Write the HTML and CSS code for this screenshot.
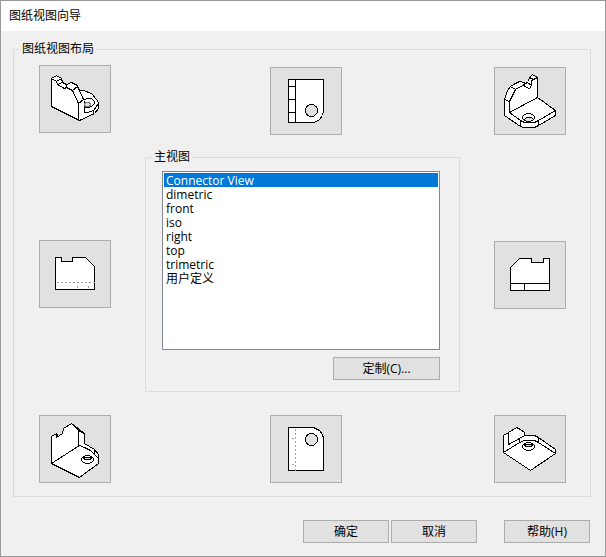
FILE: index.html
```html
<!DOCTYPE html>
<html lang="zh-CN">
<head>
  <meta charset="UTF-8">
  <title>图纸视图向导</title>
  <link rel="stylesheet" href="styles.css">
</head>
<body>
  <div class="dialog">
    <div class="title-bar">图纸视图向导</div>

    <form class="content">
      <fieldset class="group">
        <legend>图纸视图布局</legend>
        <div class="layout">

          <!-- Left views -->
          <div class="column">
            <button type="button" class="view" aria-label="左上视图">
              <svg viewBox="0.5 0.5 70 66">
                <path class="face" d="M12 13L17 10L22 13L23 17L27 19L32 17L38 20L40 25H44L52 28L57 34L59 37V43L55 48L40 55L12 41Z"/>
                <path d="M12 13L17 16L22 13M17 16L18 19L25 23L27 22M23 17L18 19M27 19V22L33 25L39 38V55M33 25L38 21L44 34L39 38M45 35V47H48L54 45L59 38M54 45V48"/>
                <path d="M45 34L48 33H52L55 36V38L52 41L48 42H45"/>
                <ellipse class="opening" cx="48" cy="39" rx="3" ry="2"/>
              </svg>
            </button>
            <button type="button" class="view" aria-label="左视图">
              <svg viewBox="0.5 0.5 70 66">
                <path class="face" d="M16 17H22V21H33V17H46L55 26V49H16Z"/>
                <path class="hidden-line" d="M17 42H55"/>
                <path class="hidden-tick" d="M38 45V47M49 45V47"/>
              </svg>
            </button>
            <button type="button" class="view" aria-label="左下视图">
              <svg viewBox="0.5 0.5 70 66">
                <path class="face" d="M12 21L17 18V22L23 18L24 13L32 8L45 18V28L55 34L59 39V48L40 62L12 48Z"/>
                <path d="M12 48L40 30L45 32L51 35L55 39L59 43M39 15V30M32 8L39 15L45 18M17 18L19 21M55 34V38"/>
                <ellipse cx="48" cy="44" rx="6" ry="4"/>
                <path class="hole" d="M44 42H52L51 44H45Z"/>
              </svg>
            </button>
          </div>

          <!-- Top view, main view list, bottom view -->
          <div class="column middle">
            <button type="button" class="view" aria-label="上视图">
              <svg viewBox="0.5 0.5 70 66">
                <path class="face" d="M18 12H53V44L52 48L49 52L46 54L43 55H18Z"/>
                <path d="M25 12V55M18 19H25M18 32H25M18 45H25"/>
                <circle class="hole" cx="41" cy="43" r="6"/>
              </svg>
            </button>

            <fieldset class="group main-view">
              <legend><label for="viewList">主视图</label></legend>
              <div class="main-body">
                <select id="viewList" size="8">
                  <option selected>Connector View</option>
                  <option>dimetric</option>
                  <option>front</option>
                  <option>iso</option>
                  <option>right</option>
                  <option>top</option>
                  <option>trimetric</option>
                  <option>用户定义</option>
                </select>
                <button type="button" class="btn custom">定制(C)...</button>
              </div>
            </fieldset>

            <button type="button" class="view" aria-label="下视图">
              <svg viewBox="0.5 0.5 70 66">
                <path class="face" d="M18 12H43L49 15L52 19L53 23V55H18Z"/>
                <path class="hidden-line" d="M25 13V55"/>
                <path class="hidden-tick" d="M21 23H23M21 49H23"/>
                <circle class="hole" cx="41" cy="24" r="6"/>
              </svg>
            </button>
          </div>

          <!-- Right views -->
          <div class="column right">
            <button type="button" class="view" aria-label="右上视图">
              <svg viewBox="0.5 0.5 70 66">
                <path class="face" d="M10 32L13 23L16 19L21 16L25 14L30 15V17L34 14L35 10L38 7L43 10V30L61 43V48L44 58L40 60H29L26 59L10 48Z"/>
                <path d="M10 32L15 34L21 22L30 17M16 19L21 22M15 34V45L43 30M15 45L26 53L30 55H40L44 53L61 43M26 53V58M44 53V58"/>
                <path d="M30 17V19L35 21L37 18L33 15M37 18V13L39 12L43 10M35 10L39 12"/>
                <ellipse cx="34" cy="50" rx="6" ry="4"/>
                <path class="hole" d="M30 52L32 50H37L39 52L36 54H32Z"/>
              </svg>
            </button>
            <button type="button" class="view" aria-label="右视图">
              <svg viewBox="0.5 0.5 70 66">
                <path class="face" d="M25 17H37V21H49V17H55V49H16V26Z"/>
                <path d="M16 42H55M30 42V49"/>
              </svg>
            </button>
            <button type="button" class="view" aria-label="右下视图">
              <svg viewBox="0.5 0.5 70 66">
                <path class="face" d="M9 20L14 17L22 12L26 14L30 17V20H40L44 22L61 34V38L36 55L9 37Z"/>
                <path d="M14 17V29L25 23L30 20M9 37L25 27L30 25H40L44 27L61 38M25 23V27M44 22V27"/>
                <ellipse cx="34" cy="31" rx="6" ry="4"/>
                <path class="hole" d="M30 29H38L37 31H31Z"/>
              </svg>
            </button>
          </div>

        </div>
      </fieldset>

      <div class="footer">
        <button type="button" class="btn">确定</button>
        <button type="button" class="btn">取消</button>
        <button type="button" class="btn help">帮助(H)</button>
      </div>
    </form>
  </div>
</body>
</html>
```
FILE: styles.css
```css
* {
  box-sizing: border-box;
}

body {
  margin: 0;
  font-family: "Open Sans", "Noto Sans CJK SC", sans-serif;
  font-size: 12px;
  line-height: 16px;
  color: #000;
}

.dialog {
  min-height: 100vh;
  border: 1px solid #999;
  background-color: #f0f0f0;
}

.title-bar {
  height: 30px;
  padding: 7px 8px;
  background-color: #fff;
}

.content {
  padding: 10px 14px 12px 12px;
}

.group {
  min-width: 0;
  margin: 0;
  padding: 0;
  border: 1px solid #dcdcdc;
}

legend {
  height: 16px;
  margin-left: 6px;
  padding: 0 2px;
}

.layout {
  display: flex;
  gap: 34px;
  padding: 8px 24px 13px 25px;
}

.column {
  display: flex;
  flex-direction: column;
  justify-content: space-between;
  align-items: center;
}

.middle {
  flex: 1;
  padding-top: 2px;
}

.middle > .view {
  margin-left: 6px;
}

.right {
  padding-top: 2px;
}

.main-view {
  width: 100%;
  margin: 14px 0 23px;
}

.main-body {
  display: flex;
  flex-direction: column;
  gap: 7px;
  padding: 6px 19px 11px 16px;
}

/* view buttons */
.view {
  width: 72px;
  height: 68px;
  padding: 0;
  border: 1px solid #adadad;
  background-color: #e1e1e1;
}

.view svg {
  display: block;
  width: 70px;
  height: 66px;
  fill: none;
  stroke: #000;
  stroke-width: 1;
  shape-rendering: crispEdges;
}

.view .face {
  fill: #fff;
}

.view .hole {
  fill: #e1e1e1;
}

.view .opening {
  fill: #e1e1e1;
  stroke: #808080;
}

.view .hidden-line {
  stroke: #a0a0a0;
  stroke-dasharray: 2 2;
}

.view .hidden-tick {
  stroke: #a0a0a0;
}

select {
  width: 100%;
  height: 179px;
  padding: 1px;
  border: 1px solid #828790;
  border-radius: 0;
  outline: none;
  background-color: #fff;
  font: inherit;
  overflow: hidden;
}

option {
  display: flex;
  align-items: center;
  height: 14px;
  min-height: 14px;
  padding: 0 2px;
  color: #000;
}

option:checked {
  background: linear-gradient(#0078d7, #0078d7);
  -webkit-text-fill-color: #fff;
}

.btn {
  width: 86px;
  height: 23px;
  padding: 0;
  border: 1px solid #adadad;
  background-color: #e1e1e1;
  font: inherit;
  color: #000;
}

.btn:hover,
.view:hover {
  border-color: #0078d7;
  background-color: #e5f1fb;
}

.custom {
  width: 107px;
  align-self: flex-end;
}

.footer {
  display: flex;
  justify-content: flex-end;
  gap: 2px;
  margin-top: 23px;
  padding-right: 1px;
}

.help {
  margin-left: 25px;
}
```
